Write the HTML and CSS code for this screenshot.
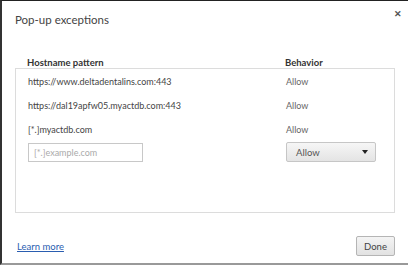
FILE: index.html
```html
<!DOCTYPE html>
<html lang="en">
<head>
  <meta charset="UTF-8" />
  <title>Pop-up exceptions</title>
  <link rel="stylesheet" href="styles.css">
</head>
<body>
  <div class="dialog">
    <div class="dialog-head">
      <h1>Pop-up exceptions</h1>
      <button class="close-btn">&#x2715;</button>
    </div>

    <div class="col-heads">
      <span class="col-host">Hostname pattern</span>
      <span class="col-behavior">Behavior</span>
    </div>

    <div class="exceptions">
      <div class="row">
        <span class="col-host">https://www.deltadentalins.com:443</span>
        <span class="col-behavior">Allow</span>
      </div>
      <div class="row">
        <span class="col-host">https://dal19apfw05.myactdb.com:443</span>
        <span class="col-behavior">Allow</span>
      </div>
      <div class="row">
        <span class="col-host">[*.]myactdb.com</span>
        <span class="col-behavior">Allow</span>
      </div>
      <div class="row new-row">
        <span class="col-host"><input type="text" class="pattern-input" placeholder="[*.]example.com"></span>
        <span class="col-behavior">
          <span class="select-box">Allow<span class="caret"></span></span>
        </span>
      </div>
    </div>

    <div class="dialog-foot">
      <a href="#" class="learn-more">Learn more</a>
      <button class="done-btn">Done</button>
    </div>
  </div>
</body>
</html>
```

FILE: styles.css
```css
html, body {
  margin: 0;
  padding: 0;
  height: 100%;
}

body {
  font-family: 'Lato', 'Open Sans', sans-serif;
  background: #ffffff;
  color: #333;
}

.dialog {
  box-sizing: border-box;
  width: 408px;
  height: 265px;
  border-top: 1px solid #222;
  border-left: 2px solid #333;
  border-bottom: 2px solid #999;
  padding: 0 13px 0 13px;
  display: flex;
  flex-direction: column;
}

.dialog-head {
  display: flex;
  justify-content: space-between;
  align-items: flex-start;
}

.dialog-head h1 {
  margin: 12px 0 0;
  font-size: 11.5px;
  font-weight: normal;
  color: #444;
}

.close-btn {
  border: none;
  background: none;
  padding: 0;
  margin: 8px -7px 0 0;
  font-size: 9px;
  color: #555;
  font-weight: bold;
  cursor: pointer;
}

.col-heads {
  display: flex;
  margin-top: 31px;
  padding-left: 12px;
  font-size: 9.5px;
  font-weight: bold;
  color: #333;
}

.col-host {
  width: 258px;
}

.exceptions {
  margin-top: 0;
  height: 145px;
  border: 1px solid #dcdcdc;
  box-sizing: border-box;
  padding: 0 0 0 12px;
}

.row {
  display: flex;
  align-items: center;
  height: 24px;
  font-size: 9px;
  color: #444;
}

.row .col-behavior {
  color: #666;
}

.new-row {
  height: 22px;
}

.pattern-input {
  box-sizing: border-box;
  width: 115px;
  height: 19px;
  border: 1px solid #c8c8c8;
  padding: 0 5px;
  font-family: inherit;
  font-size: 9px;
}

.pattern-input::placeholder {
  color: #aaa;
}

.select-box {
  box-sizing: border-box;
  display: flex;
  justify-content: space-between;
  align-items: center;
  width: 90px;
  height: 20px;
  padding: 0 7px 0 9px;
  border: 1px solid #c6c6c6;
  border-radius: 2px;
  background: linear-gradient(#f6f6f6, #e4e4e4);
  color: #555;
  font-size: 9.5px;
}

.caret {
  width: 0;
  height: 0;
  border-left: 3.5px solid transparent;
  border-right: 3.5px solid transparent;
  border-top: 4px solid #222;
}

.dialog-foot {
  display: flex;
  justify-content: space-between;
  align-items: center;
  margin-top: 23px;
  padding-left: 2px;
}

.learn-more {
  font-size: 9.5px;
  color: #2a5db0;
}

.done-btn {
  width: 39px;
  height: 20px;
  padding: 0;
  border: 1px solid #b5b5b5;
  border-radius: 2px;
  background: linear-gradient(#f4f4f4, #e2e2e2);
  font-family: inherit;
  font-size: 9.5px;
  color: #444;
  cursor: pointer;
}
```
